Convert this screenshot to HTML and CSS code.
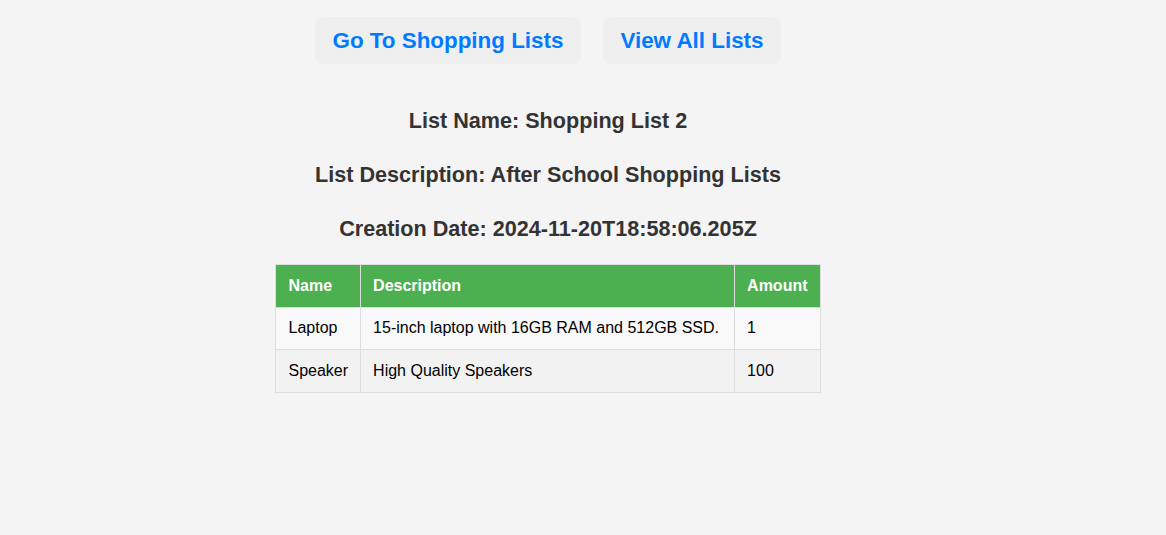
FILE: index.html
```html
<!DOCTYPE html>
<html>
<head>
<meta charset="utf-8">
<link rel="stylesheet" href="styles.css">
</head>
<body>
<div class="page">
  <nav class="nav">
    <a class="nav-btn" href="#">Go To Shopping Lists</a>
    <a class="nav-btn" href="#">View All Lists</a>
  </nav>
  <h2 class="info">List Name: Shopping List 2</h2>
  <h2 class="info">List Description: After School Shopping Lists</h2>
  <h2 class="info">Creation Date: 2024-11-20T18:58:06.205Z</h2>
  <table class="items">
    <thead>
      <tr><th class="col-name">Name</th><th class="col-desc">Description</th><th class="col-amt">Amount</th></tr>
    </thead>
    <tbody>
      <tr><td>Laptop</td><td>15-inch laptop with 16GB RAM and 512GB SSD.</td><td>1</td></tr>
      <tr><td>Speaker</td><td>High Quality Speakers</td><td>100</td></tr>
    </tbody>
  </table>
</div>
</body>
</html>
```
FILE: styles.css
```css
html, body {
  margin: 0;
  padding: 0;
  background: #f4f4f4;
  font-family: "Liberation Sans", Arial, sans-serif;
  color: #333;
}
.page {
  display: flex;
  flex-direction: column;
  align-items: center;
  padding: 17px 70px 0 0;
}
.nav {
  display: flex;
  gap: 22px;
}
.nav-btn {
  display: block;
  background: #efefef;
  border-radius: 8px;
  padding: 0 17.5px;
  height: 47px;
  line-height: 47px;
  color: #007bff;
  font-weight: bold;
  font-size: 22.4px;
  text-decoration: none;
}
.info {
  font-size: 21.6px;
  font-weight: bold;
  margin: 0;
  line-height: 24px;
}
.info:nth-of-type(1) { margin-top: 45px; }
.info + .info { margin-top: 29.5px; }
.info:nth-of-type(3) { margin-top: 30.5px; }
.items {
  margin-top: 23px;
  border-collapse: collapse;
  font-size: 16px;
  color: #000;
}
.items th, .items td {
  border: 1px solid #ddd;
  padding: 0 12px;
  height: 42.6px;
  text-align: left;
  box-sizing: border-box;
}
.col-name { width: 83px; }
.col-desc { width: 374px; }
.col-amt { width: 85px; }
.items th {
  background: #4caf50;
  color: #fff;
  font-weight: bold;
}
.items tbody tr:nth-child(odd) { background: #f9f9f9; }
.items tbody tr:nth-child(even) { background: #f2f2f2; }
```
